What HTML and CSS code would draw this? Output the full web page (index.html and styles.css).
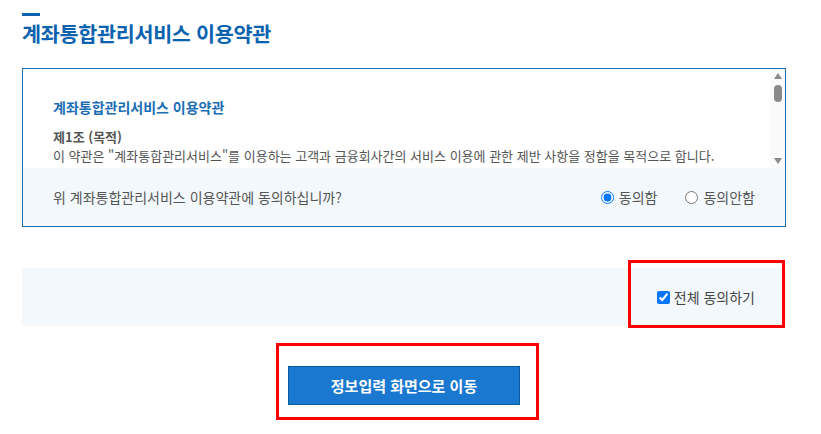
FILE: index.html
```html
<!DOCTYPE html>
<html lang="ko">
<head>
<meta charset="utf-8">
<link rel="stylesheet" href="styles.css">
</head>
<body>
<div class="page">
  <div class="head">
    <span class="accent"></span>
    <h1 class="title">계좌통합관리서비스 이용약관</h1>
  </div>

  <div class="terms">
    <div class="scroll">
      <div class="scroll-body">
        <p class="doc-title">계좌통합관리서비스 이용약관</p>
        <p class="art-title">제1조 (목적)</p>
        <p class="art-text">이 약관은 "계좌통합관리서비스"를 이용하는 고객과 금융회사간의 서비스 이용에 관한 제반 사항을 정함을 목적으로 합니다.</p>
      </div>
      <div class="scrollbar">
        <svg class="arrow" width="10" height="8" viewBox="0 0 10 8"><path d="M5 1 L9 7 L1 7 Z" fill="#8a8a8a"/></svg>
        <span class="thumb"></span>
        <span class="track"></span>
        <svg class="arrow" width="10" height="8" viewBox="0 0 10 8"><path d="M1 1 L9 1 L5 7 Z" fill="#8a8a8a"/></svg>
      </div>
    </div>
    <div class="question">
      <span class="q-text">위 계좌통합관리서비스 이용약관에 동의하십니까?</span>
      <div class="choices">
        <label class="choice"><input type="radio" name="agree" checked>동의함</label>
        <label class="choice"><input type="radio" name="agree">동의안함</label>
      </div>
    </div>
  </div>

  <div class="all-agree">
    <label class="check"><input type="checkbox" checked>전체 동의하기</label>
    <span class="mark mark-check"></span>
  </div>

  <div class="actions">
    <div class="btn-mark">
      <button class="btn" type="button">정보입력 화면으로 이동</button>
    </div>
  </div>
</div>
</body>
</html>
```

FILE: styles.css
```css
* { box-sizing: border-box; }
html, body { margin: 0; padding: 0; background: #fff; }
body {
  font-family: "Noto Sans CJK KR", "Noto Sans", sans-serif;
  color: #555;
}
.page {
  width: 764px;
  margin-left: 22px;
  padding-top: 13px;
}
.head { display: flex; flex-direction: column; }
.accent {
  display: block;
  width: 18px;
  height: 3px;
  background: #0b63b0;
}
.title {
  margin: 3px 0 0;
  font-size: 20.7px;
  line-height: 28px;
  font-weight: 700;
  color: #0b63b0;
  letter-spacing: -0.3px;
}
.terms {
  margin-top: 21px;
  border: 1px solid #1d6db5;
}
.scroll {
  display: flex;
  height: 99px;
  background: #fff;
}
.scroll-body {
  flex: 1;
  overflow: hidden;
  padding: 29px 30px 0 30px;
}
.scroll-body p { margin: 0; font-size: 13px; line-height: 19px; }
.scroll-body .doc-title {
  color: #1b6db5;
  font-weight: 700;
  font-size: 14px;
  margin-bottom: 10px;
}
.art-title { font-weight: 700; color: #555; }
.art-text { color: #555; white-space: nowrap; }
.scrollbar {
  width: 15px;
  background: #fafafa;
  display: flex;
  flex-direction: column;
  align-items: center;
  padding: 3px 0 3px;
}
.arrow { display: block; flex: none; }
.thumb {
  display: block;
  width: 8px;
  height: 17px;
  margin-top: 5px;
  border-radius: 4px;
  background: #8a8a8a;
}
.track { flex: 1; }
.question {
  height: 58px;
  background: #f2f8fc;
  display: flex;
  align-items: center;
  justify-content: space-between;
  padding: 0 30px;
  font-size: 14px;
}
.choices { display: flex; gap: 28px; }
.choice {
  display: flex;
  align-items: center;
  font-size: 14px;
  color: #555;
}
.choice input { margin: 0 5px 0 0; width: 13px; height: 13px; }
.all-agree {
  position: relative;
  margin-top: 41px;
  height: 58px;
  background: #f2f8fc;
  display: flex;
  align-items: center;
  justify-content: flex-end;
  padding: 0 31px 0 0;
}
.check {
  display: flex;
  align-items: center;
  font-size: 14px;
  color: #444;
}
.check input { margin: 0 4px 0 0; width: 13px; height: 13px; }
.mark {
  position: absolute;
  border: 3px solid #ff0000;
  pointer-events: none;
}
.mark-check { left: 606px; top: -8px; width: 157px; height: 68px; }
.actions {
  display: flex;
  padding-left: 254px;
  margin-top: 17px;
}
.btn-mark {
  border: 3px solid #ff0000;
  padding: 20px 16px 12px 9px;
}
.btn {
  display: block;
  width: 232px;
  height: 39px;
  background: #1a78d0;
  border: 1px solid #0a5a9c;
  color: #fff;
  font-family: "Noto Sans CJK KR", "Noto Sans", sans-serif;
  font-size: 15px;
  font-weight: 700;
  padding: 0;
}
```
